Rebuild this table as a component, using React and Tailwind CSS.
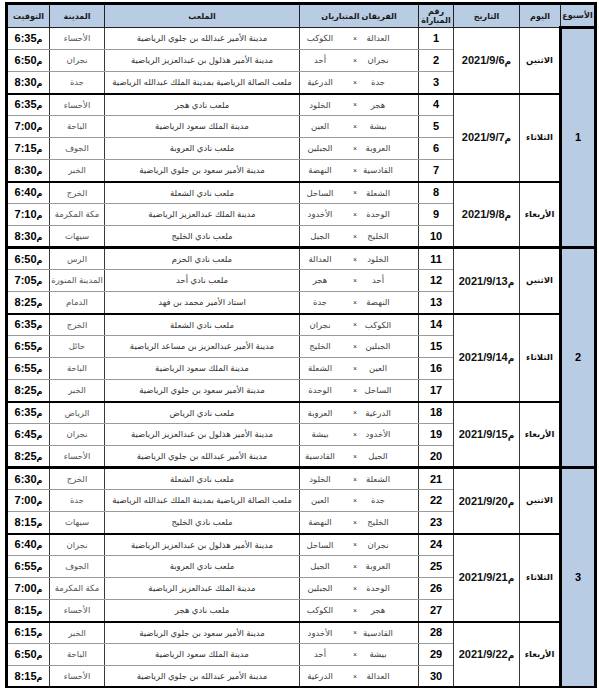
import React from "react";

const matches = [
  [1, "العدالة", "الكوكب", "مدينة الأمير عبدالله بن جلوي الرياضية", "الأحساء", "6:35"],
  [2, "نجران", "أحد", "مدينة الأمير هذلول بن عبدالعزيز الرياضية", "نجران", "6:50"],
  [3, "جدة", "الدرعية", "ملعب الصالة الرياضية بمدينة الملك عبدالله الرياضية", "جدة", "8:30"],
  [4, "هجر", "الخلود", "ملعب نادي هجر", "الأحساء", "6:35"],
  [5, "بيشة", "العين", "مدينة الملك سعود الرياضية", "الباحة", "7:00"],
  [6, "العروبة", "الجبلين", "ملعب نادي العروبة", "الجوف", "7:15"],
  [7, "القادسية", "النهضة", "مدينة الأمير سعود بن جلوي الرياضية", "الخبر", "8:30"],
  [8, "الشعلة", "الساحل", "ملعب نادي الشعلة", "الخرج", "6:40"],
  [9, "الوحدة", "الأخدود", "مدينة الملك عبدالعزيز الرياضية", "مكة المكرمة", "7:10"],
  [10, "الخليج", "الجيل", "ملعب نادي الخليج", "سيهات", "8:30"],
  [11, "الخلود", "العدالة", "ملعب نادي الحزم", "الرس", "6:50"],
  [12, "أحد", "هجر", "ملعب نادي أحد", "المدينة المنورة", "7:05"],
  [13, "النهضة", "جدة", "استاد الأمير محمد بن فهد", "الدمام", "8:25"],
  [14, "الكوكب", "نجران", "ملعب نادي الشعلة", "الخرج", "6:35"],
  [15, "الجبلين", "الخليج", "مدينة الأمير عبدالعزيز بن مساعد الرياضية", "حائل", "6:55"],
  [16, "العين", "الشعلة", "مدينة الملك سعود الرياضية", "الباحة", "6:55"],
  [17, "الساحل", "الوحدة", "مدينة الأمير سعود بن جلوي الرياضية", "الخبر", "8:25"],
  [18, "الدرعية", "العروبة", "ملعب نادي الرياض", "الرياض", "6:35"],
  [19, "الأخدود", "بيشة", "مدينة الأمير هذلول بن عبدالعزيز الرياضية", "نجران", "6:45"],
  [20, "الجيل", "القادسية", "مدينة الأمير عبدالله بن جلوي الرياضية", "الأحساء", "8:25"],
  [21, "الشعلة", "الخلود", "ملعب نادي الشعلة", "الخرج", "6:30"],
  [22, "جدة", "العين", "ملعب الصالة الرياضية بمدينة الملك عبدالله الرياضية", "جدة", "7:00"],
  [23, "الخليج", "النهضة", "ملعب نادي الخليج", "سيهات", "8:15"],
  [24, "نجران", "الساحل", "مدينة الأمير هذلول بن عبدالعزيز الرياضية", "نجران", "6:40"],
  [25, "العروبة", "الجيل", "ملعب نادي العروبة", "الجوف", "6:55"],
  [26, "الوحدة", "الجبلين", "مدينة الملك عبدالعزيز الرياضية", "مكة المكرمة", "7:00"],
  [27, "هجر", "الكوكب", "ملعب نادي هجر", "الأحساء", "8:15"],
  [28, "القادسية", "الأخدود", "مدينة الأمير سعود بن جلوي الرياضية", "الخبر", "6:15"],
  [29, "بيشة", "أحد", "مدينة الملك سعود الرياضية", "الباحة", "6:50"],
  [30, "العدالة", "الدرعية", "مدينة الأمير عبدالله بن جلوي الرياضية", "الأحساء", "8:15"],
];

// day groups: first row index, row count
const days = [
  { start: 0, n: 3, day: "الاثنين", date: "2021/9/6" },
  { start: 3, n: 4, day: "الثلاثاء", date: "2021/9/7" },
  { start: 7, n: 3, day: "الأربعاء", date: "2021/9/8" },
  { start: 10, n: 3, day: "الاثنين", date: "2021/9/13" },
  { start: 13, n: 4, day: "الثلاثاء", date: "2021/9/14" },
  { start: 17, n: 3, day: "الأربعاء", date: "2021/9/15" },
  { start: 20, n: 3, day: "الاثنين", date: "2021/9/20" },
  { start: 23, n: 4, day: "الثلاثاء", date: "2021/9/21" },
  { start: 27, n: 3, day: "الأربعاء", date: "2021/9/22" },
];

const td = "border border-x-[#3a3a3a] border-y-[#9a9a9a] h-[22px] p-0 text-center align-middle leading-none";
const th = "border border-[#222] bg-[#b8cce4] p-0 text-center align-middle font-bold text-[8px] leading-[9px] text-[#1a1a1a] whitespace-nowrap";

export default function App() {
  return (
    <div className="bg-white min-h-screen pt-[2px] pl-[5px] [font-family:'Liberation_Sans','DejaVu_Sans',sans-serif]">
      <table dir="rtl" className="table-fixed border-collapse w-[589px] border-[3px] border-black">
        <colgroup>
          <col className="w-[35px]" />
          <col className="w-[41px]" />
          <col className="w-[66px]" />
          <col className="w-[35px]" />
          <col className="w-[119px]" />
          <col className="w-[195px]" />
          <col className="w-[55px]" />
          <col className="w-[43px]" />
        </colgroup>
        <thead>
          <tr className="h-[24px]">
            <th className={th}>الأسبوع</th>
            <th className={th}>اليوم</th>
            <th className={th}>التاريخ</th>
            <th className={th}>
              رقم
              <br />
              المباراة
            </th>
            <th className={th}>الفريقان المتباريان</th>
            <th className={th}>الملعب</th>
            <th className={th}>المدينة</th>
            <th className={th}>التوقيت</th>
          </tr>
        </thead>
        <tbody>
          {matches.map((m, i) => {
            const g = days.find((d) => i >= d.start && i < d.start + d.n);
            const groupStart = g.start === i;
            const groupEnd = g.start + g.n - 1 === i;
            const weekStart = i % 10 === 0;
            const weekEnd = i % 10 === 9;
            const groupBottom = (g.start + g.n) % 10 === 0 ? " border-b-[3px]" : " border-b-2";
            const bottom = weekEnd
              ? " border-b-[3px] border-b-black"
              : groupEnd
              ? " border-b-2 border-b-black"
              : "";
            return (
              <tr key={m[0]}>
                {weekStart && (
                  <td
                    rowSpan={10}
                    className="border-[3px] border-black bg-[#b8cce4] text-center align-middle font-bold text-[11px] text-black"
                  >
                    {i / 10 + 1}
                  </td>
                )}
                {groupStart && (
                  <td
                    rowSpan={g.n}
                    className={
                      "border border-[#3a3a3a] border-b-black bg-white text-center align-middle font-bold text-[8.5px] text-[#111]" +
                      groupBottom
                    }
                  >
                    {g.day}
                  </td>
                )}
                {groupStart && (
                  <td
                    rowSpan={g.n}
                    className={
                      "border border-[#3a3a3a] border-b-black bg-white text-center align-middle font-bold text-[11px] text-[#111]" +
                      groupBottom
                    }
                  >
                    <span dir="ltr">
                      {g.date}
                      <span className="text-[9px]">م</span>
                    </span>
                  </td>
                )}
                <td className={td + bottom + " font-bold text-[11px] text-black"}>{m[0]}</td>
                <td className={td + bottom + " text-[8.5px] text-[#444]"}>
                  <div className="grid grid-cols-[40px_6px_52px] pr-[20px] items-center">
                    <div className="flex justify-center whitespace-nowrap">{m[1]}</div>
                    <div className="flex justify-center text-[7px] text-[#333]">×</div>
                    <div className="flex justify-center whitespace-nowrap pr-[12px]">{m[2]}</div>
                  </div>
                </td>
                <td className={td + bottom + " text-[8.5px] text-[#333] whitespace-nowrap"}>{m[3]}</td>
                <td className={td + bottom + " text-[8.5px] text-[#555] whitespace-nowrap"}>{m[4]}</td>
                <td className={td + bottom + " font-bold text-[11px] text-black"}>
                  <span dir="ltr">
                    {m[5]}
                    <span className="text-[8px]">م</span>
                  </span>
                </td>
              </tr>
            );
          })}
        </tbody>
      </table>
    </div>
  );
}
